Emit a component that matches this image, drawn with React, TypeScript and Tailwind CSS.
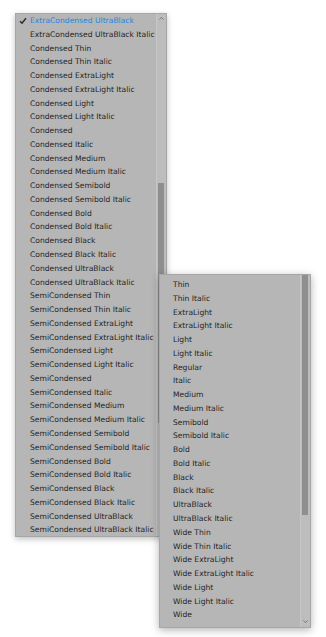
import React from 'react';

const leftItems = [
  'ExtraCondensed UltraBlack',
  'ExtraCondensed UltraBlack Italic',
  'Condensed Thin',
  'Condensed Thin Italic',
  'Condensed ExtraLight',
  'Condensed ExtraLight Italic',
  'Condensed Light',
  'Condensed Light Italic',
  'Condensed',
  'Condensed Italic',
  'Condensed Medium',
  'Condensed Medium Italic',
  'Condensed Semibold',
  'Condensed Semibold Italic',
  'Condensed Bold',
  'Condensed Bold Italic',
  'Condensed Black',
  'Condensed Black Italic',
  'Condensed UltraBlack',
  'Condensed UltraBlack Italic',
  'SemiCondensed Thin',
  'SemiCondensed Thin Italic',
  'SemiCondensed ExtraLight',
  'SemiCondensed ExtraLight Italic',
  'SemiCondensed Light',
  'SemiCondensed Light Italic',
  'SemiCondensed',
  'SemiCondensed Italic',
  'SemiCondensed Medium',
  'SemiCondensed Medium Italic',
  'SemiCondensed Semibold',
  'SemiCondensed Semibold Italic',
  'SemiCondensed Bold',
  'SemiCondensed Bold Italic',
  'SemiCondensed Black',
  'SemiCondensed Black Italic',
  'SemiCondensed UltraBlack',
  'SemiCondensed UltraBlack Italic',
];

const rightItems = [
  'Thin',
  'Thin Italic',
  'ExtraLight',
  'ExtraLight Italic',
  'Light',
  'Light Italic',
  'Regular',
  'Italic',
  'Medium',
  'Medium Italic',
  'Semibold',
  'Semibold Italic',
  'Bold',
  'Bold Italic',
  'Black',
  'Black Italic',
  'UltraBlack',
  'UltraBlack Italic',
  'Wide Thin',
  'Wide Thin Italic',
  'Wide ExtraLight',
  'Wide ExtraLight Italic',
  'Wide Light',
  'Wide Light Italic',
  'Wide',
];

function Check() {
  return (
    <svg width="8" height="8" viewBox="0 0 8 8" className="absolute left-[3px] top-[3px]">
      <path d="M1 4.2 L3 6.3 L7 1.2" fill="none" stroke="#2b2b2b" strokeWidth="1.4" />
    </svg>
  );
}

function Row({ label, selected, pad }: { label: string; selected?: boolean; pad: string }) {
  return (
    <div className={`relative h-[13.78px] leading-[13.78px] whitespace-nowrap ${pad} ${selected ? 'text-[#1f86e0]' : 'text-[#242424]'}`}>
      {selected && <Check />}
      {label}
    </div>
  );
}

export default function App() {
  return (
    <div
      className="relative w-[326px] h-[637px] bg-white overflow-hidden text-[7.6px]"
      style={{ fontFamily: '"DejaVu Sans", "Liberation Sans", sans-serif' }}
    >
      {/* first menu */}
      <div className="ml-[15px] mt-[13px] w-[152px] h-[524px] flex bg-[#b6b6b6] border border-[#a6a6a6] shadow-[0_2px_6px_rgba(0,0,0,0.25)]">
        <div className="flex-1 overflow-hidden">
          {leftItems.map((l, i) => (
            <Row key={l} label={l} selected={i === 0} pad="pl-[14px]" />
          ))}
        </div>
        <div className="w-[10px] flex flex-col bg-[#bdbdbd] border-l border-[#c6c6c6]">
          <svg width="9" height="6" viewBox="0 0 9 6" className="mt-[1px]">
            <path d="M2.5 4.5 L4.5 2.3 L6.5 4.5" fill="none" stroke="#7a7a7a" strokeWidth="1" />
          </svg>
          <div className="mt-[162px] mx-[1px] w-[6px] h-[240px] bg-[#8f8f8f]" />
        </div>
      </div>

      {/* second menu, overlapping */}
      <div className="absolute left-[159px] top-[274px] w-[152px] h-[354px] flex bg-[#b6b6b6] border border-[#a6a6a6] shadow-[0_2px_8px_rgba(0,0,0,0.3)]">
        <div className="flex-1 overflow-hidden pt-[3px]">
          {rightItems.map((l) => (
            <Row key={l} label={l} pad="pl-[13px]" />
          ))}
        </div>
        <div className="w-[10px] flex flex-col bg-[#bdbdbd] border-l border-[#c6c6c6]">
          <div className="mx-[1px] w-[6px] h-[240px] bg-[#8f8f8f]" />
          <div className="flex-1" />
          <svg width="9" height="6" viewBox="0 0 9 6" className="mb-[2px]">
            <path d="M2.5 1.5 L4.5 3.7 L6.5 1.5" fill="none" stroke="#7a7a7a" strokeWidth="1" />
          </svg>
        </div>
      </div>
    </div>
  );
}
